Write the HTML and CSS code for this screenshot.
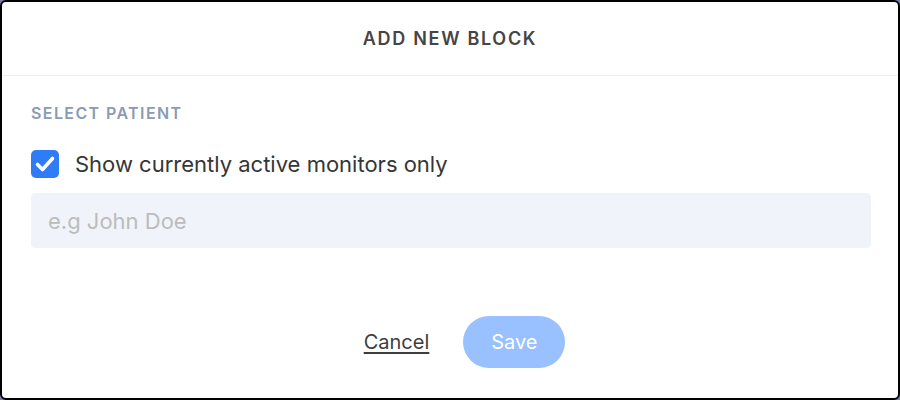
FILE: index.html
```html
<!DOCTYPE html>
<html lang="en">
<head>
    <meta charset="UTF-8">
    <meta name="viewport" content="width=device-width, initial-scale=1.0">
    <title>Add New Block</title>
    <link rel="stylesheet" href="styles.css">
</head>
<body>
    <div class="modal">
        <div class="modal-header">
            <h2>Add new block</h2>
        </div>

        <div class="modal-body">
            <label class="field-label">Select patient</label>

            <label class="check-row">
                <span class="checkbox">
                    <svg width="28" height="28" viewBox="0 0 28 28">
                        <path d="M6.5 14.5 L11.5 19.5 L21.5 8.5" fill="none" stroke="#fff" stroke-width="3.6" stroke-linecap="round" stroke-linejoin="round"/>
                    </svg>
                </span>
                <span class="check-text">Show currently active monitors only</span>
            </label>

            <input class="patient-input" type="text" placeholder="e.g John Doe">
        </div>

        <div class="modal-footer">
            <button class="btn-cancel">Cancel</button>
            <button class="btn-save">Save</button>
        </div>
    </div>
</body>
</html>
```

FILE: styles.css
```css
* {
    box-sizing: border-box;
}
body {
    margin: 0;
    background-color: #7b7ea6;
    font-family: Inter, "Open Sans", Arial, sans-serif;
}
.modal {
    display: flex;
    flex-direction: column;
    height: 400px;
    background-color: #fff;
    border: 2px solid #000;
    border-radius: 6px;
}
.modal-header {
    height: 74px;
    display: flex;
    align-items: center;
    justify-content: center;
    border-bottom: 1px solid #eef0f6;
}
.modal-header h2 {
    margin: 0;
    font-size: 18px;
    font-weight: 600;
    letter-spacing: 1.7px;
    text-transform: uppercase;
    color: #454545;
}
.modal-body {
    display: flex;
    flex-direction: column;
    padding: 27px 27px 0 29px;
}
.field-label {
    font-size: 16px;
    line-height: 20px;
    font-weight: 600;
    letter-spacing: 1.4px;
    text-transform: uppercase;
    color: #8b9bb2;
}
.check-row {
    display: flex;
    align-items: center;
    gap: 16px;
    margin-top: 27px;
}
.checkbox {
    width: 28px;
    height: 28px;
    border-radius: 5px;
    background-color: #2f7cf6;
    display: flex;
}
.check-text {
    font-size: 22px;
    color: #363636;
}
.patient-input {
    margin-top: 15px;
    height: 55px;
    padding: 0 17px;
    border: none;
    border-radius: 4px;
    background-color: #f0f4fa;
    font-family: inherit;
    font-size: 22px;
    color: #333;
    outline: none;
}
.patient-input::placeholder {
    color: #bcbcbc;
}
.modal-footer {
    margin-top: auto;
    display: flex;
    align-items: center;
    justify-content: center;
    gap: 34px;
    padding: 0 0 30px 29px;
}
.btn-cancel {
    padding: 0;
    border: none;
    background: none;
    font-family: inherit;
    font-size: 20px;
    color: #3d3d3d;
    text-decoration: underline;
    text-underline-offset: 3px;
    cursor: pointer;
}
.btn-save {
    width: 102px;
    height: 52px;
    border: none;
    border-radius: 26px;
    background-color: #99c0ff;
    color: #fff;
    font-family: inherit;
    font-size: 20px;
    cursor: pointer;
}
```
